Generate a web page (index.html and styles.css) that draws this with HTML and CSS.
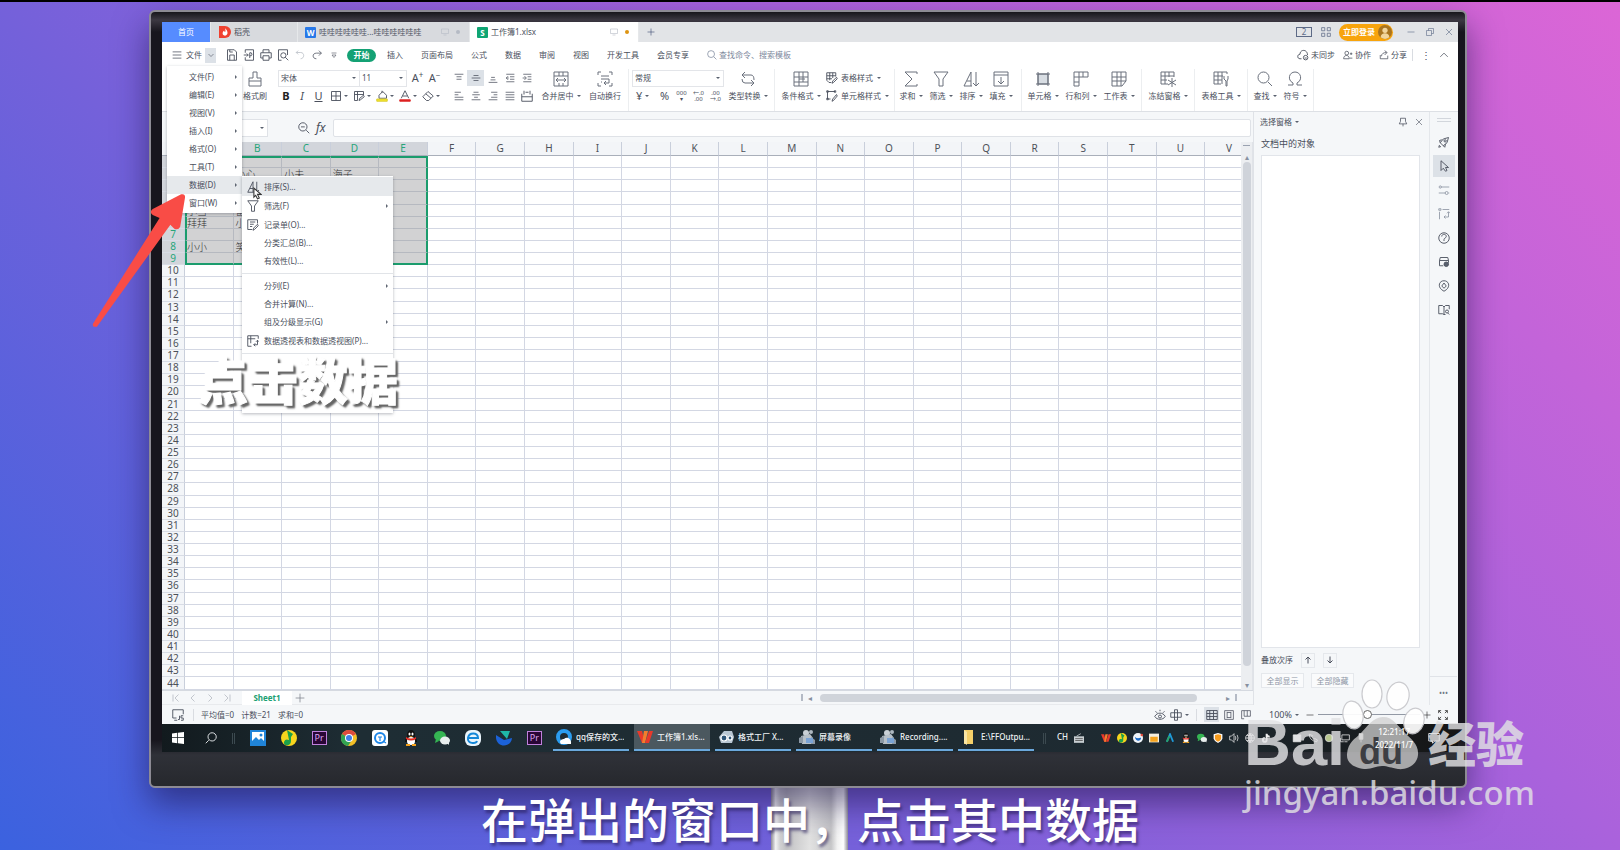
FILE: index.html
```html
<!DOCTYPE html>
<html lang="zh-CN">
<head>
<meta charset="utf-8">
<title>工作簿1.xlsx</title>
<link rel="stylesheet" href="styles.css">
</head>
<body>
<svg class="sprite" aria-hidden="true">
  <symbol id="menu" viewBox="0 0 16 16"><path d="M1 3h14M1 8h14M1 13h14"/></symbol>
  <symbol id="down" viewBox="0 0 16 16"><path d="M3 6l5 5 5-5"/></symbol>
  <symbol id="up" viewBox="0 0 16 16"><path d="M2 11l6-6 6 6"/></symbol>
  <symbol id="save" viewBox="0 0 16 16"><path d="M2 1h9l3 3v11H2zM5 15V8h6v7M5 1v3h4"/></symbol>
  <symbol id="pdf" viewBox="0 0 16 16"><path d="M3 5V1h11v14H3v-4M1 8h6M5 6l2 2-2 2M9 12V5h2q2 2 0 4H9"/></symbol>
  <symbol id="print" viewBox="0 0 16 16"><path d="M4 5V1h8v4M4 12H1V5h14v7h-3M4 9h8v6H4z"/></symbol>
  <symbol id="preview" viewBox="0 0 16 16"><path d="M6 15H2V1h12v7M11 11l4 4"/><circle cx="8.500" cy="8.500" r="3.500"/></symbol>
  <symbol id="undo" viewBox="0 0 16 16"><path d="M5 1L2 4l3 3M2 4h7c7 0 6 10 0 10"/></symbol>
  <symbol id="redo" viewBox="0 0 16 16"><path d="M11 1l4 4-4 4M15 5H7c-7 0-7 9 0 9"/></symbol>
  <symbol id="more" viewBox="0 0 16 16"><path d="M3 4h10M4 8h8l-4 5z"/></symbol>
  <symbol id="search" viewBox="0 0 16 16"><circle cx="6.500" cy="6.500" r="5.500"/><path d="M11 11l4 4"/></symbol>
  <symbol id="zoomout" viewBox="0 0 16 16"><circle cx="6.500" cy="6.500" r="5.500"/><path d="M11 11l4 4M4 6.500h5"/></symbol>
  <symbol id="brush" viewBox="0 0 16 16"><path d="M6 7V1h4v6h4v8H2V7zM2 10h12"/></symbol>
  <symbol id="border" viewBox="0 0 16 16"><path d="M2 2h12v12H2zM8 2v12M2 8h12"/></symbol>
  <symbol id="cellpen" viewBox="0 0 16 16"><path d="M6 14H2V2h12v5M2 6h12M6 2v12M8 14l1-3 5-4 1 2-5 4z"/></symbol>
  <symbol id="fill" viewBox="0 0 16 16"><path d="M4 7l5-5 5 5v4H4zM8 4V1"/><path d="M1 12h14v3H1z" fill="#f5e62a" stroke="#d8cc30"/></symbol>
  <symbol id="fontcolor" viewBox="0 0 16 16"><path d="M3 11L8 1l5 10M5 8h6"/><path d="M1 13h14v2H1z" fill="#d22" stroke="#d22"/></symbol>
  <symbol id="eraser" viewBox="0 0 16 16"><path d="M8 2l7 6-6 6H6L1 9zM5 5l7 6"/></symbol>
  <symbol id="atop" viewBox="0 0 16 16"><path d="M1 2h14M4 6h8M4 10h8"/></symbol>
  <symbol id="amid" viewBox="0 0 16 16"><path d="M4 4h8M1 8h14M4 12h8"/></symbol>
  <symbol id="abot" viewBox="0 0 16 16"><path d="M5 7h6M4 11h8M1 15h14"/></symbol>
  <symbol id="indent" viewBox="0 0 16 16"><path d="M2 2h13M8 6h7M8 10h7M2 14h13M5 5L2 8l3 3M2 8h4"/></symbol>
  <symbol id="outdent" viewBox="0 0 16 16"><path d="M2 2h13M9 6h6M9 10h6M2 14h13M4 5l3 3-3 3M1 8h5"/></symbol>
  <symbol id="aleft" viewBox="0 0 16 16"><path d="M1 2h10M1 6h6M1 10h14M1 14h14"/></symbol>
  <symbol id="acenter" viewBox="0 0 16 16"><path d="M4 2h8M2 6h12M5 10h6M1 14h14"/></symbol>
  <symbol id="aright" viewBox="0 0 16 16"><path d="M5 2h10M9 6h6M5 10h10M1 14h14"/></symbol>
  <symbol id="ajust" viewBox="0 0 16 16"><path d="M1 2h14M1 6h14M1 10h14M1 14h14"/></symbol>
  <symbol id="spread" viewBox="0 0 16 16"><path d="M1 5v10h14V5M1 9h14M4 1v5M12 1v5M6 3h4"/></symbol>
  <symbol id="merge" viewBox="0 0 16 16"><path d="M1 1h14v14H1zM1 5h14M6 1v4M10 1v4M6 12v3M10 12v3M3 9h10M5 7L3 9l2 2M11 7l2 2-2 2"/></symbol>
  <symbol id="wrap" viewBox="0 0 16 16"><path d="M4 1H1v3M12 1h3v3M4 15H1v-3M12 15h3v-3M4 5h8M4 8h8v4H7M9 10l-2 2 2 2M4 11h1"/></symbol>
  <symbol id="convert" viewBox="0 0 16 16"><path d="M5 1L2 4l3 3M2 4h9q3 0 3 5M11 9l3 3-3 3M14 12H5q-3 0-3-4"/></symbol>
  <symbol id="cond" viewBox="0 0 16 16"><path d="M1 1h14v14H1zM1 6h14M1 11h14M6 1v14M10 1v10M6 8h6"/></symbol>
  <symbol id="tstyle" viewBox="0 0 16 16"><path d="M7 14H4L1 11V1h12v5M1 5h12M1 9h7M5 1v10M9 1v7M8 15l1-3 5-5 1 2-5 5z"/></symbol>
  <symbol id="form" viewBox="0 0 16 16"><path d="M7 14H1V1h13v5M4 4h7M4 7h5M4 10h3M8 15l1-3 5-5 1 2-5 5z"/></symbol>
  <symbol id="cstyle" viewBox="0 0 16 16"><path d="M2 2h10M2 2v10M2 12h4M8 15l1-3 5-6 1 2-5 6zM1 1h2v2H1zM11 1h2v2h-2zM1 11h2v2H1z"/></symbol>
  <symbol id="sum" viewBox="0 0 16 16"><path d="M14 3V1H2l7 7-7 7h12v-2"/></symbol>
  <symbol id="filter" viewBox="0 0 16 16"><path d="M1 1h14L10 8v7H6V8z"/></symbol>
  <symbol id="sort" viewBox="0 0 16 16"><path d="M1 15L8 1v14M4 10h4M1 15h8M13 1v14M10 12l3 3 3-3"/></symbol>
  <symbol id="filldown" viewBox="0 0 16 16"><path d="M1 1h14v14H1zM1 4h14M8 6v7M5 10l3 3 3-3"/></symbol>
  <symbol id="cell" viewBox="0 0 16 16"><path d="M3 3h10v10H3z" fill="#d8dde3"/><path d="M1 3h14M1 13h14M3 1v14M13 1v14"/></symbol>
  <symbol id="rowcol" viewBox="0 0 16 16"><path d="M1 1h14v5H6v9H1zM1 6h5M6 1v5M10 1v5M1 11h5"/></symbol>
  <symbol id="sheet" viewBox="0 0 16 16"><path d="M1 1h14v9l-4 5H1zM1 6h14M1 10h14M6 1v14M10 1v14"/></symbol>
  <symbol id="freeze" viewBox="0 0 16 16"><path d="M8 13H1V1h13v5M1 5h13M5 1v12M9 1v5M1 9h6M12 7v9M8 9l8 5M16 9l-8 5"/></symbol>
  <symbol id="ttool" viewBox="0 0 16 16"><path d="M8 13H1V1h13v2M1 5h9M5 1v12M9 1v12M1 9h8M11 5v3l2 2v5h1v-5l1-2V5"/></symbol>
  <symbol id="omega" viewBox="0 0 16 16"><path d="M1 14h5v-2C0 9 2 1 8 1s8 8 2 11v2h5"/></symbol>
  <symbol id="cloud" viewBox="0 0 16 16"><path d="M6 13H4C0 13 0 7 4 7c0-7 10-7 10 1"/><circle cx="11.500" cy="11.500" r="3"/><path d="M10 12h3"/></symbol>
  <symbol id="person" viewBox="0 0 16 16"><circle cx="6" cy="5" r="3"/><path d="M1 14c0-7 9-7 9 0zM11 6h4M13 4v4M11 13h4"/></symbol>
  <symbol id="share" viewBox="0 0 16 16"><path d="M2 8v6h12V9M4 10c0-4 3-6 8-6M9 1l4 3-4 4"/></symbol>
  <symbol id="screen" viewBox="0 0 16 16"><path d="M1 2h14v9H1zM5 14h6"/></symbol>
  <symbol id="four" viewBox="0 0 16 16"><path d="M1 1h5v5H1zM10 1h5v5h-5zM1 10h5v5H1zM10 10h5v5h-5z"/></symbol>
  <symbol id="restore" viewBox="0 0 16 16"><path d="M1 5h10v10H1zM5 5V1h10v10h-4"/></symbol>
  <symbol id="close" viewBox="0 0 16 16"><path d="M2 2l12 12M14 2L2 14"/></symbol>
  <symbol id="minus" viewBox="0 0 16 16"><path d="M1 8h14"/></symbol>
  <symbol id="plus" viewBox="0 0 16 16"><path d="M1 8h14M8 1v14"/></symbol>
  <symbol id="pin" viewBox="0 0 16 16"><path d="M4 2h8v5l2 4H2l2-4zM8 11v4"/></symbol>
  <symbol id="rocket" viewBox="0 0 16 16"><path d="M14 2L7 4 3 9l4 4 5-4zM5 5L2 6l1 3M10 11l-1 4-2-2M2 12l-1 3 3-1"/><circle cx="9.500" cy="6.500" r="1.500"/></symbol>
  <symbol id="cursor" viewBox="0 0 16 16"><path d="M4 1v13l3-3 3 4 2-1-2-4h4z"/></symbol>
  <symbol id="sliders" viewBox="0 0 16 16"><path d="M4 4h11M1 12h9M14 12h1"/><circle cx="3" cy="4" r="1.500"/><circle cx="11.500" cy="12" r="2"/></symbol>
  <symbol id="pivot" viewBox="0 0 16 16"><path d="M1 1h3v2H1zM6 2h9M2 5v10M14 5v7H8M10 10l-2 2 2 2M12 7l2-2 2 2"/></symbol>
  <symbol id="pivotbox" viewBox="0 0 16 16"><path d="M6 15H1V1h14v4M5 1v10M1 5h10M14 7v6H9M11 11l-2 2 2 2M12 9l2-2 2 2"/></symbol>
  <symbol id="help" viewBox="0 0 16 16"><circle cx="8" cy="8" r="7"/><path d="M5 6c0-4 6-4 6 0 0 2-3 2-3 4v2"/></symbol>
  <symbol id="db" viewBox="0 0 16 16"><path d="M2 6l1-4h10l1 4v3M2 6h12M2 6v7h5"/><circle cx="11" cy="11" r="3" fill="#59606e"/></symbol>
  <symbol id="bulb" viewBox="0 0 16 16"><path d="M5 13C-1 8 2 1 8 1s9 7 3 12l-3 2zM8 4l3 4-3 3-3-3z"/></symbol>
  <symbol id="book" viewBox="0 0 16 16"><path d="M8 4L6 2H1v11h5l2 1zM8 4l2-2h5v5M8 14h2"/><circle cx="12" cy="10" r="2"/><path d="M13 12l2 2"/></symbol>
  <symbol id="first" viewBox="0 0 16 16"><path d="M2 1v14M13 1L6 8l7 7"/></symbol>
  <symbol id="prev" viewBox="0 0 16 16"><path d="M11 1L4 8l7 7"/></symbol>
  <symbol id="next" viewBox="0 0 16 16"><path d="M5 1l7 7-7 7"/></symbol>
  <symbol id="last" viewBox="0 0 16 16"><path d="M3 1l7 7-7 7M14 1v14"/></symbol>
  <symbol id="eye" viewBox="0 0 16 16"><path d="M1 10c3-6 11-6 14 0-3 5-11 5-14 0M2 3l2 2M8 1v2M14 3l-2 2"/><circle cx="8" cy="10" r="2"/></symbol>
  <symbol id="cross" viewBox="0 0 16 16"><path d="M6 1h4v14H6zM1 5h14v6H1z"/></symbol>
  <symbol id="vgrid" viewBox="0 0 16 16"><path d="M1 2h14v12H1zM1 6h14M1 10h14M5 2v12M10 2v12"/></symbol>
  <symbol id="vpage" viewBox="0 0 16 16"><path d="M1 1h14v14H1zM5 3v10M11 3v10M5 4h6M5 12h6"/></symbol>
  <symbol id="vbreak" viewBox="0 0 16 16"><path d="M1 14V1h14v9h-5V1M5 1v9h5M1 14h4"/></symbol>
  <symbol id="full" viewBox="0 0 16 16"><path d="M1 5V1h4M1 1l4 4M11 1h4v4M15 1l-4 4M1 11v4h4M1 15l4-4M15 11v4h-4M15 15l-4-4"/></symbol>
  <symbol id="record" viewBox="0 0 16 16"><path d="M6 12H1V1h14v6M3 15h4M10 9v5H8M15 9h-3v3h3v3h-3"/></symbol>
  <symbol id="arrup" viewBox="0 0 16 16"><path d="M8 15V2M3 7l5-5 5 5" stroke-width="2"/></symbol>
  <symbol id="arrdn" viewBox="0 0 16 16"><path d="M8 1v13M3 9l5 5 5-5" stroke-width="2"/></symbol>
  <symbol id="qqmusic" viewBox="0 0 16 16"><circle cx="8" cy="8" r="8" fill="#f7d51d" stroke="none"/><path d="M6 0l6 4-2 3v4c0 6-8 5-7 1 1-3 3-3 5-2z" fill="#1ca04a" stroke="none"/></symbol>
  <symbol id="penguin" viewBox="0 0 16 16"><g stroke="none"><ellipse cx="8" cy="5" rx="4" ry="5" fill="#111"/><path d="M2 12c0-4 2-5 6-5s6 1 6 5z" fill="#111"/><ellipse cx="8" cy="11" rx="4" ry="4" fill="#fff"/><path d="M3 7q5 3 10 0v2q-5 3-10 0z" fill="#e52b22"/><ellipse cx="6.500" cy="4" rx="1" ry="1.500" fill="#fff"/><ellipse cx="9.500" cy="4" rx="1" ry="1.500" fill="#fff"/><path d="M3 14h4v2H3zM9 14h4v2H9zM6 6h4l-2 1z" fill="#f5a11c"/></g></symbol>
  <symbol id="wechat" viewBox="0 0 16 16"><g stroke="none"><ellipse cx="6" cy="6" rx="6" ry="5" fill="#35b553"/><path d="M2 9l-1 4 4-2z" fill="#35b553"/><ellipse cx="11" cy="10.500" rx="5" ry="4" fill="#e8eeee"/><path d="M13 13l2 2v-3z" fill="#e8eeee"/></g></symbol>
  <symbol id="chrome" viewBox="0 0 16 16"><g stroke="none"><circle cx="8" cy="8" r="8" fill="#f2bf26"/><path d="M8 8L1 4a8 8 0 0 1 14 0z" fill="#dd4b3e"/><path d="M8 8L1 4a8 8 0 0 0 6 12l4-6z" fill="#32a352"/><circle cx="8" cy="8" r="4" fill="#fff"/><circle cx="8" cy="8" r="3" fill="#3f7ee8"/></g></symbol>
  <symbol id="camera" viewBox="0 0 16 16"><g stroke="none"><circle cx="7" cy="4" r="3" fill="#c9d0d6"/><circle cx="12" cy="3" r="2" fill="#aeb8c0"/><path d="M2 7l9-2 3 4v6H3z" fill="#b7c0c8"/><path d="M0 9l4-2v7H0zM12 8l4 3v4h-4z" fill="#8c98a4"/><path d="M7 9h7v5H7z" fill="#7ba3d4"/></g></symbol>
  <symbol id="wps" viewBox="0 0 16 16"><g stroke="none"><path d="M0 2h5l3 12H5z" fill="#e8392b"/><path d="M7 2h4l-3 12H5z" fill="#f57c2c"/><path d="M12 2h4l-4 12H8z" fill="#e8392b"/></g></symbol>
</svg>

<main class="page">
  <div class="stand"></div>
  <section class="monitor">
    <div class="screen">
      <header class="tabbar">
        <button class="tab home">首页</button>
        <button class="tab docer"><svg class="i12" viewBox="0 0 16 16"><path d="M0 0h8a8 8 0 0 1 0 16H0z" fill="#f0402f" stroke="none"/><path d="M8 3c4 3 5 9 0 10-5-1-3-6-1-7 0 3 3 3 1-3z" fill="#fff" stroke="none"/></svg>稻壳</button>
        <button class="tab wdoc"><span class="logo blue">W</span><span class="grow">哇哇哇哇哇哇...哇哇哇哇哇哇</span><svg class="i8 pale"><use href="#screen"/></svg><i class="dot grey"></i></button>
        <button class="tab sdoc"><span class="logo green">S</span><span class="grow">工作簿1.xlsx</span><svg class="i8 pale"><use href="#screen"/></svg><i class="dot"></i></button>
        <button class="tab add" aria-label="新建"><svg class="i8"><use href="#plus"/></svg></button>
        <div class="wintools">
          <span class="two">2</span><svg class="i10"><use href="#four"/></svg>
          <button class="login">立即登录<svg viewBox="0 0 16 16"><circle cx="8" cy="8" r="8" fill="#a87420" stroke="none"/><circle cx="8" cy="6" r="3" fill="#f2d59b" stroke="none"/><path d="M3 14c0-6 10-6 10 0q-5 4-10 0z" fill="#f2d59b" stroke="none"/></svg></button>
          <button class="wbtn" aria-label="最小化"><svg class="i8"><use href="#minus"/></svg></button>
          <button class="wbtn" aria-label="还原"><svg class="i8"><use href="#restore"/></svg></button>
          <button class="wbtn" aria-label="关闭"><svg class="i8"><use href="#close"/></svg></button>
        </div>
      </header>

      <nav class="menubar">
        <button class="filebtn"><svg class="i10"><use href="#menu"/></svg>文件</button>
        <button class="filedrop" aria-label="展开菜单"><svg class="i8"><use href="#down"/></svg></button>
        <div class="quick">
          <button aria-label="保存"><svg class="i12"><use href="#save"/></svg></button>
          <button aria-label="输出为PDF"><svg class="i12"><use href="#pdf"/></svg></button>
          <button aria-label="打印"><svg class="i12"><use href="#print"/></svg></button>
          <button aria-label="打印预览"><svg class="i12"><use href="#preview"/></svg></button>
          <button aria-label="撤销"><svg class="i10 pale2"><use href="#undo"/></svg></button>
          <button aria-label="恢复"><svg class="i10"><use href="#redo"/></svg></button>
          <button aria-label="更多"><svg class="i8"><use href="#more"/></svg></button>
        </div>
        <button class="pill">开始</button>
        <div class="tabs"><button>插入</button><button>页面布局</button><button>公式</button><button>数据</button><button>审阅</button><button>视图</button><button>开发工具</button><button>会员专享</button>
          <button class="find"><svg class="i10"><use href="#search"/></svg>查找命令、搜索模板</button></div>
        <div class="cloud">
          <button><svg class="i12"><use href="#cloud"/></svg>未同步</button>
          <button><svg class="i10"><use href="#person"/></svg>协作</button>
          <button><svg class="i10"><use href="#share"/></svg>分享</button>
          <span class="vsep"></span><span class="kebab">⋮</span><svg class="i10"><use href="#up"/></svg>
        </div>
      </nav>

      <div class="ribbon">
        <div class="group clip"><button class="big w36"><svg class="i16"><use href="#brush"/></svg><span>格式刷</span></button></div>
        <div class="group font">
          <div class="line">
            <button class="combo cfont">宋体<i class="tri"></i></button><button class="combo csize">11<i class="tri"></i></button>
            <button class="asz">A<sup>+</sup></button><button class="asz">A<sup>−</sup></button>
          </div>
          <div class="line">
            <button class="c16 fb">B</button><button class="c16 fi">I</button><button class="c17 fu">U</button>
            <button class="c23"><svg class="i12"><use href="#border"/></svg><i class="tri"></i></button>
            <button class="c23"><svg class="i12"><use href="#cellpen"/></svg><i class="tri"></i></button>
            <button class="c23"><svg class="i12"><use href="#fill"/></svg><i class="tri"></i></button>
            <button class="c23"><svg class="i12"><use href="#fontcolor"/></svg><i class="tri"></i></button>
            <button class="c23"><svg class="i12"><use href="#eraser"/></svg><i class="tri"></i></button>
          </div>
        </div>
        <div class="group align">
          <div class="line"><button class="c17"><svg class="i10"><use href="#atop"/></svg></button><button class="c17 on"><svg class="i10"><use href="#amid"/></svg></button><button class="c17"><svg class="i10"><use href="#abot"/></svg></button><button class="c17"><svg class="i10"><use href="#indent"/></svg></button><button class="c17"><svg class="i10"><use href="#outdent"/></svg></button></div>
          <div class="line"><button class="c17"><svg class="i10"><use href="#aleft"/></svg></button><button class="c17"><svg class="i10"><use href="#acenter"/></svg></button><button class="c17"><svg class="i10"><use href="#aright"/></svg></button><button class="c17"><svg class="i10"><use href="#ajust"/></svg></button><button class="c17"><svg class="i12"><use href="#spread"/></svg></button></div>
        </div>
        <div class="group row sep pr5">
          <button class="big w52"><svg class="i16"><use href="#merge"/></svg><span>合并居中<i class="tri"></i></span></button>
          <button class="big w36"><svg class="i16"><use href="#wrap"/></svg><span>自动换行</span></button>
        </div>
        <div class="group number">
          <div class="line"><button class="combo cnum">常规<i class="tri"></i></button></div>
          <div class="line"><button class="c24">¥<i class="tri"></i></button><button class="c17">%</button><button class="c17 dec">000<br>▾</button><button class="c17 dec">←.0<br>.00</button><button class="c17 dec">.00<br>→.0</button></div>
        </div>
        <div class="group row sep pr5"><button class="big w42"><svg class="i16"><use href="#convert"/></svg><span>类型转换<i class="tri"></i></span></button></div>
        <div class="group row sep styles">
          <button class="big w42"><svg class="i16"><use href="#cond"/></svg><span>条件格式<i class="tri"></i></span></button>
          <div class="stack"><button class="line"><svg class="i12"><use href="#tstyle"/></svg>表格样式<i class="tri"></i></button><button class="line"><svg class="i12"><use href="#cstyle"/></svg>单元格样式<i class="tri"></i></button></div>
        </div>
        <div class="group row sep calc">
          <button class="big w30"><svg class="i16"><use href="#sum"/></svg><span>求和<i class="tri"></i></span></button>
          <button class="big w30"><svg class="i16"><use href="#filter"/></svg><span>筛选<i class="tri"></i></span></button>
          <button class="big w30"><svg class="i16"><use href="#sort"/></svg><span>排序<i class="tri"></i></span></button>
          <button class="big w30"><svg class="i16"><use href="#filldown"/></svg><span>填充<i class="tri"></i></span></button>
        </div>
        <div class="group row sep cells">
          <button class="big w38"><svg class="i16"><use href="#cell"/></svg><span>单元格<i class="tri"></i></span></button>
          <button class="big w38"><svg class="i16"><use href="#rowcol"/></svg><span>行和列<i class="tri"></i></span></button>
          <button class="big w38"><svg class="i16"><use href="#sheet"/></svg><span>工作表<i class="tri"></i></span></button>
        </div>
        <div class="group row sep"><button class="big w52"><svg class="i16"><use href="#freeze"/></svg><span>冻结窗格<i class="tri"></i></span></button></div>
        <div class="group row sep"><button class="big w52"><svg class="i16"><use href="#ttool"/></svg><span>表格工具<i class="tri"></i></span></button></div>
        <div class="group row sep cells">
          <button class="big w30"><svg class="i16"><use href="#search"/></svg><span>查找<i class="tri"></i></span></button>
          <button class="big w30"><svg class="i16"><use href="#omega"/></svg><span>符号<i class="tri"></i></span></button>
        </div>
      </div>

      <div class="work">
        <div class="book">
          <div class="formula">
            <button class="namebox" aria-label="名称框"><i class="tri"></i></button>
            <svg class="i12"><use href="#zoomout"/></svg><span class="fx">fx</span>
            <input class="finput" aria-label="编辑栏">
          </div>
          <div class="gridrow">
            <div class="gridwrap"><table class="grid" id="grid"></table></div>
            <div class="vscroll"><span class="vsplit"></span><span class="sbtn">▴</span><span class="vthumb"></span><span class="sbtn">▾</span></div>
          </div>
          <div class="sheetbar">
            <div class="navs"><svg class="i8"><use href="#first"/></svg><svg class="i8"><use href="#prev"/></svg><svg class="i8"><use href="#next"/></svg><svg class="i8"><use href="#last"/></svg></div>
            <button class="sheet">Sheet1</button>
            <button class="addsheet" aria-label="新建工作表"><svg class="i10"><use href="#plus"/></svg></button>
            <div class="hscroll"><i class="split"></i><span class="sbtn">◂</span><span class="hthumb"></span><span class="sbtn">▸</span><i class="split"></i></div>
          </div>
        </div>
        <aside class="pane">
          <div class="panehead"><button>选择窗格<i class="tri"></i></button><span class="fillx"></span><svg class="i10"><use href="#pin"/></svg><svg class="i8"><use href="#close"/></svg></div>
          <h2>文档中的对象</h2>
          <div class="objects"></div>
          <div class="order"><span>叠放次序</span><button aria-label="上移"><svg class="i8"><use href="#arrup"/></svg></button><button aria-label="下移"><svg class="i8"><use href="#arrdn"/></svg></button></div>
          <div class="showhide"><button>全部显示</button><button>全部隐藏</button></div>
        </aside>
        <nav class="strip">
          <span class="grip"></span>
          <button aria-label="推荐"><svg class="i12"><use href="#rocket"/></svg></button>
          <button class="on" aria-label="选择"><svg class="i12"><use href="#cursor"/></svg></button>
          <button class="dim" aria-label="属性"><svg class="i12"><use href="#sliders"/></svg></button>
          <button class="dim" aria-label="透视表"><svg class="i12"><use href="#pivot"/></svg></button>
          <button aria-label="帮助"><svg class="i12"><use href="#help"/></svg></button>
          <button aria-label="备份"><svg class="i12"><use href="#db"/></svg></button>
          <button aria-label="技巧"><svg class="i12"><use href="#bulb"/></svg></button>
          <button aria-label="学习"><svg class="i12"><use href="#book"/></svg></button>
          <span class="stripmore">•••</span>
        </nav>
      </div>

      <footer class="status">
        <svg class="i12"><use href="#record"/></svg><span class="vsep"></span>
        <span class="stat">平均值=0</span><span class="stat">计数=21</span><span class="stat">求和=0</span>
        <div class="views">
          <svg class="i12"><use href="#eye"/></svg><span class="withtri"><svg class="i12"><use href="#cross"/></svg><i class="tri"></i></span><span class="vsep"></span>
          <button class="on" aria-label="普通视图"><svg class="i12"><use href="#vgrid"/></svg></button>
          <button aria-label="页面布局"><svg class="i10"><use href="#vpage"/></svg></button>
          <button aria-label="分页预览"><svg class="i10"><use href="#vbreak"/></svg></button>
          <span class="pct">100%<i class="tri"></i></span>
          <svg class="i8 dark"><use href="#minus"/></svg>
          <input class="zoom" type="range" min="0" max="100" value="48" aria-label="缩放">
          <svg class="i8 dark"><use href="#plus"/></svg><svg class="i10 dark"><use href="#full"/></svg>
        </div>
      </footer>

      <div class="taskbar">
        <div class="pinned">
          <svg class="i12" viewBox="0 0 16 16"><path d="M0 2l7-1v6H0zM8 1l8-1v7H8zM0 8h7v7l-7-1zM8 8h8v8l-8-1z" fill="#fff" stroke="none"/></svg>
          <svg class="i12 flip"><use href="#search"/></svg>
          <span class="bars"></span>
          <svg viewBox="0 0 16 16"><path d="M0 0h16v16H0z" fill="#2084d8" stroke="none"/><path d="M2 2h12v12H2z" fill="#fff" stroke="none"/><path d="M2 11l4-4 3 3 2-2 3 3v3H2z" fill="#2084d8" stroke="none"/><circle cx="11" cy="5" r="1.500" fill="#2084d8" stroke="none"/></svg>
          <svg><use href="#qqmusic"/></svg>
          <span class="pr">Pr</span>
          <svg><use href="#chrome"/></svg>
          <svg viewBox="0 0 16 16"><rect width="16" height="16" rx="3" fill="#fff" stroke="none"/><circle cx="8" cy="8" r="5" stroke="#1c86e8" stroke-width="2"/><path d="M11 11l3 2M6 7h4M8 7v4" stroke="#1c86e8"/></svg>
          <svg><use href="#penguin"/></svg>
          <svg><use href="#wechat"/></svg>
          <svg viewBox="0 0 16 16"><rect width="16" height="16" rx="6" fill="#eaf5fc" stroke="none"/><path d="M3 8h10c0-6-9-6-10 0s8 6 9 3" stroke="#1487d8" stroke-width="2"/></svg>
          <svg viewBox="0 0 16 16"><path d="M4 1h10L11 9z" fill="#1fb8a8" stroke="none"/><path d="M0 5l8 5 8-2c-1 10-15 10-16 0z" fill="#1b62d8" stroke="none"/></svg>
          <span class="pr">Pr</span>
        </div>
        <div class="tasks">
          <button><svg viewBox="0 0 16 16"><circle cx="8" cy="8" r="6" stroke="#2b9df0" stroke-width="4"/><path d="M5 15c-3-4 2-5 3-5 3-3 8 0 7 5z" fill="#fff" stroke="none"/></svg><span>qq保存的文...</span></button>
          <button class="on"><svg><use href="#wps"/></svg><span>工作簿1.xls...</span></button>
          <button><svg viewBox="0 0 16 16"><path d="M1 8l5-6h8l2 6-2 6H3z" fill="#b8c6d2" stroke="none"/><circle cx="6" cy="9" r="3" fill="#2d5476" stroke="#fff"/><circle cx="12" cy="9" r="2" fill="#2d5476" stroke="#fff"/></svg><span>格式工厂 X...</span></button>
          <button><svg><use href="#camera"/></svg><span>屏幕录像</span></button>
          <button><svg><use href="#camera"/></svg><span>Recording....</span></button>
          <button><svg viewBox="0 0 16 16"><path d="M3 1h9v14H3z" fill="#f5cf69" stroke="none"/><path d="M3 1l3 2v13l-3-2z" fill="#fbe6a5" stroke="none"/></svg><span>E:\FFOutpu...</span></button>
        </div>
        <div class="tray">
          <span class="bars"></span><b>CH</b>
          <svg viewBox="0 0 16 16"><path d="M0 6h16v9H0zM4 5l7-4" fill="#c8ced2" stroke="#c8ced2"/><path d="M2 9h12M2 12h12" stroke="#444"/></svg>
          <svg class="first"><use href="#wps"/></svg>
          <svg><use href="#qqmusic"/></svg>
          <svg viewBox="0 0 16 16"><circle cx="8" cy="8" r="8" fill="#f0f5fa" stroke="none"/><path d="M3 6c5 5 8 0 10 2-1 6-9 6-10-2z" fill="#1b6bc8" stroke="none"/><circle cx="14" cy="3" r="2" fill="#e64b3d" stroke="none"/></svg>
          <svg viewBox="0 0 16 16"><path d="M0 1h16v14H0z" fill="#f4efe0" stroke="none"/><path d="M2 6h12v8H2z" fill="#f6a41e" stroke="none"/></svg>
          <svg viewBox="0 0 16 16"><path d="M3 14L8 2l5 12" stroke="#1f9ad8" stroke-width="3"/><path d="M3 14l4-9" stroke="#27a36b" stroke-width="3"/></svg>
          <svg><use href="#penguin"/></svg>
          <svg><use href="#wechat"/></svg>
          <svg viewBox="0 0 16 16"><path d="M1 2l7-2 7 2v7q-1 4-7 7-6-3-7-7z" fill="#fff" stroke="none"/><path d="M3 3l5-1 5 1v6q-1 3-5 5-4-2-5-5z" fill="#f59b1d" stroke="none"/></svg>
          <svg class="w" viewBox="0 0 16 16"><path d="M1 5h3l4-4v14l-4-4H1zM10 5q2 3 0 6M13 3q3 5 0 10"/></svg>
          <svg class="w" viewBox="0 0 16 16"><circle cx="8" cy="8" r="7"/><path d="M1 8h14M8 1v14M3 4h10M3 12h10M8 1q-6 7 0 14M8 1q6 7 0 14"/></svg>
          <svg class="w" viewBox="0 0 16 16"><path d="M9 1v10a3 3 0 1 1-3-3M9 2q1 4 5 4" stroke-width="3"/></svg>
          <svg class="w gap" viewBox="0 0 16 16"><path d="M2 3h12v11H2z" fill="#dfe3e4"/></svg>
          <svg class="w" viewBox="0 0 16 16"><path d="M2 2q0 10 12 12l1-3-4-2-2 1-3-4 1-2z"/></svg>
          <svg viewBox="0 0 16 16"><circle cx="8" cy="8" r="6" fill="#b8c890" stroke="#ddd"/></svg>
          <svg class="w" viewBox="0 0 16 16"><path d="M3 3h12v8H3zM1 8v6h5M7 14h5"/></svg>
          <svg class="w" viewBox="0 0 16 16"><path d="M5 1h6v9H5zM8 10v5" fill="#eee"/></svg>
          <time class="clock">12:21:17<br>2022/11/7</time>
          <svg class="w note" viewBox="0 0 16 16"><path d="M1 2h14v10H9l-3 3v-3H1z"/></svg>
        </div>
      </div>

      <div class="menu">
        <button>文件(F)<i></i></button><button>编辑(E)<i></i></button><button>视图(V)<i></i></button><button>插入(I)<i></i></button><button>格式(O)<i></i></button><button>工具(T)<i></i></button><button class="on">数据(D)<i></i></button><button>窗口(W)<i></i></button>
      </div>
      <div class="submenu">
        <button class="on"><svg><use href="#sort"/></svg>排序(S)...</button>
        <button><svg><use href="#filter"/></svg>筛选(F)<i></i></button>
        <button><svg><use href="#form"/></svg>记录单(O)...</button>
        <button class="noicon">分类汇总(B)...</button>
        <button class="noicon">有效性(L)...</button>
        <hr>
        <button class="noicon">分列(E)<i></i></button>
        <button class="noicon">合并计算(N)...</button>
        <button class="noicon">组及分级显示(G)<i></i></button>
        <button><svg><use href="#pivotbox"/></svg>数据透视表和数据透视图(P)...</button>
        <hr>
        <div class="rest"></div>
      </div>
      <svg class="mouse" viewBox="0 0 10 14"><path d="M1 1v10l2-2 2 4 2-1-2-4h4z" fill="#fff" stroke="#333"/></svg>
    </div>
  </section>

  <svg class="redarrow" viewBox="0 0 100 140"><path d="M2 134L70 26l-7-3q-4-3 0-6L92 2q4-1 4 3l-5 30q-2 4-6 2l-4-4L6 137q-5 1-4-3z" fill="#f94c46" stroke="none"/></svg>
  <div class="callout">点击数据</div>
  <p class="subtitle">在弹出的窗口中，点击其中数据</p>
  <div class="mark">
    <div class="markrow">
      <span class="bai">Bai</span>
      <svg class="paw" viewBox="0 0 84 92"><g fill="#fff" stroke="#c8c8cc" opacity=".93"><ellipse cx="30" cy="15" rx="10" ry="14"/><ellipse cx="56" cy="17" rx="11" ry="14" transform="rotate(12 56 17)"/><ellipse cx="11" cy="36" rx="10" ry="14" transform="rotate(-10 11 36)"/><ellipse cx="72" cy="42" rx="10" ry="13" transform="rotate(18 72 42)"/></g><path d="M41 38c10 0 14 8 21 15s15 12 14 23-13 15-20 14-10-3-16-3-10 3-16 3S4 87 5 75s8-15 14-21 12-16 22-16z" fill="#d0d0d0" fill-opacity=".76" stroke="none"/><text x="39" y="85" text-anchor="middle" class="du">du</text></svg>
      <span class="jy">经验</span>
    </div>
    <div class="url">jingyan.baidu.com</div>
  </div>
</main>
<script src="grid.js"></script>
</body>
</html>
```
FILE: grid.js
```js
const columns = "ABCDEFGHIJKLMNOPQRSTUV".split("");
const cells = {
  B2: "小心", C2: "小夫", D2: "海子",
  A5: "小当", B5: "雷雷",
  A6: "拜拜", B6: "小明", E6: "轮",
  A8: "小小", B8: "笑笑"
};
const lastSelectedRow = 9;
const lastSelectedCol = 4;

const head = columns
  .map((c, i) => `<th class="${i <= lastSelectedCol ? "sel" : ""}">${c}</th>`)
  .join("");
let body = "";
for (let r = 1; r <= 44; r++) {
  const rowSel = r <= lastSelectedRow;
  const tds = columns.map((c, i) => {
    const cls = [];
    if (rowSel && i <= lastSelectedCol) {
      cls.push("sel");
      if (r === 1) cls.push("t");
      if (r === lastSelectedRow) cls.push("b");
      if (i === 0) cls.push("l");
      if (i === lastSelectedCol) cls.push("r");
    }
    return `<td class="${cls.join(" ")}">${cells[c + r] || ""}</td>`;
  }).join("");
  body += `<tr><th class="${rowSel ? "sel" : ""}">${r}</th>${tds}</tr>`;
}
document.getElementById("grid").innerHTML =
  `<colgroup><col class="numcol"></colgroup><thead><tr><th></th>${head}</tr></thead><tbody>${body}</tbody>`;
```
FILE: styles.css
```css
* { box-sizing: border-box; }
body { margin: 0; font: 8px/12px "Noto Sans", "Noto Sans CJK SC", sans-serif; color: #4a4f5c; }
button { margin: 0; padding: 0; border: 0; background: none; font: inherit; color: inherit; white-space: nowrap; display: flex; align-items: center; }
svg { fill: none; stroke: currentColor; stroke-width: 1.2; flex: none; }
.sprite { position: absolute; width: 0; height: 0; }
.i8 { width: 8px; height: 8px; } .i10 { width: 10px; height: 10px; } .i12 { width: 12px; height: 12px; }
.i16 { width: 16px; height: 16px; }
.tri { display: inline-block; width: 0; height: 0; border: 2px solid transparent; border-top-color: #59606e; border-bottom: 0; margin-left: 3px; flex: none; }
.vsep { width: 1px; height: 12px; background: #d9dce1; }

.page { position: relative; min-height: 100vh; padding: 8px 153px 62px 149px; display: flex; flex-direction: column; overflow: hidden; border-top: 2px solid #000;
  background: linear-gradient(45deg, #3b62df 0%, #7461da 34%, #aa62dc 66%, #dc66d6 100%); }
.stand { position: absolute; left: 771px; bottom: 0; width: 77px; height: 66px; background: linear-gradient(90deg, #8e8b98 0, #f4f4f4 6%, #d0d0d2 12%, #c2c2c4 20%, #e2e2e2 50%, #c6c6c8 78%, #f2f2f2 86%, #fff 94%, #8e8b98 100%); }
.monitor { position: relative; flex: 1; display: flex; padding: 10px 7px 34px 11px; border: 2px solid #8d8b94; border-radius: 6px; background: linear-gradient(#17161b 0, #3c3842 8px, #17151d 20px, #17151d 94%, #2f3138 96%, #26282d 100%); box-shadow: 0 16px 34px rgba(24, 14, 70, .55); }
.screen { position: relative; flex: 1; min-width: 0; display: flex; flex-direction: column; background: #f5f7f9; }

.tabbar { display: flex; height: 20px; background: #e2e4e7; }
.tab { height: 20px; background: #d8dade; border-right: 1px solid #e6e8ea; gap: 3px; }
.home { width: 49px; justify-content: center; background: #568cff; color: #fff; }
.docer { width: 87px; padding-left: 8px; }
.wdoc { width: 172px; padding: 0 9px 0 7px; }
.sdoc { width: 169px; padding: 0 9px 0 7px; background: #fff; }
.grow { flex: 1; text-align: left; }
.logo { width: 11px; height: 11px; border-radius: 1px; color: #fff; font-weight: 700; line-height: 11px; text-align: center; }
.blue { background: #2878e8; } .green { background: #0fa573; }
.pale { color: #b5bac4; } .pale2 { color: #b4b9c2; } .dark { color: #222; }
.dot { width: 4px; height: 4px; border-radius: 2px; background: #dd9412; margin-left: 4px; } .grey { background: #b5bac4; }
.add { width: 24px; background: none; border: 0; justify-content: center; color: #3d4a72; }
.wintools { margin-left: auto; display: flex; align-items: center; color: #5d6a86; }
.two { width: 16px; height: 10px; border: 1px solid #5d6a86; line-height: 8px; text-align: center; margin-right: 9px; }
.login { height: 17px; margin: 0 8px 0 8px; padding: 0 1px 0 4px; border-radius: 9px; background: #f8a40c; color: #fff; gap: 3px; font-weight: 700; }
.login svg { width: 14px; height: 14px; }
.wbtn { width: 19px; justify-content: center; }

.menubar { display: flex; align-items: center; height: 26px; background: #fff; padding: 0 9px 0 10px; }
.filebtn { gap: 4px; width: 33px; }
.filedrop { width: 11px; height: 15px; background: #dce1e7; justify-content: center; margin-right: 7px; }
.quick { display: flex; } .quick button { width: 17px; justify-content: center; }
.pill { width: 29px; height: 13px; border-radius: 7px; background: #14a174; color: #fff; justify-content: center; font-weight: 700; margin: 0 11px 0 5px; }
.tabs { display: flex; gap: 18px; } .find { gap: 2px; color: #7d889c; }
.cloud { margin-left: auto; display: flex; align-items: center; gap: 8px; } .cloud button { gap: 2px; }
.cloud .vsep { margin: 0 0 0 -3px; } .kebab { font-size: 10px; }

.ribbon { display: flex; height: 44px; background: #fff; border-bottom: 1px solid #dde0e5; padding-top: 1px; }
.group { flex: none; } .row { display: flex; } .sep { border-right: 1px solid #eceef0; }
.line { display: flex; align-items: center; height: 18px; }
.clip { width: 111px; display: flex; justify-content: flex-end; }
.font { width: 173px; padding-left: 5px; }
.align { width: 89px; padding-left: 4px; }
.number { width: 98px; padding-left: 3px; }
.pr5 { padding-right: 5px; }
.big { flex-direction: column; height: 34px; padding-top: 2px; gap: 3px; color: #6a707c; } .big span { display: flex; align-items: center; color: #4a4f5c; }
.big svg { stroke-width: 1; }
.w30 { width: 30px; } .w36 { width: 36px; } .w38 { width: 38px; } .w42 { width: 42px; } .w52 { width: 52px; }
.combo { height: 17px; border: 1px solid #e3e5e9; padding: 0 3px 0 2px; justify-content: space-between; }
.cfont { width: 82px; } .csize { width: 47px; border-left: 0; } .cnum { width: 92px; }
.asz { width: 17px; justify-content: center; font-size: 11px; } .asz sup { font-size: 8px; line-height: 8px; margin-bottom: 6px; }
.csize + .asz { margin-left: 2px; }
.c16, .c17 { justify-content: center; font-size: 11px; } .c16 { width: 16px; } .c17 { width: 17px; height: 16px; }
.c23 { width: 23px; padding-left: 3px; } .c23 .tri { margin-left: 2px; }
.c24 { width: 24px; padding-left: 4px; font-size: 11px; }
.fb { font-weight: 700; color: #222; } .fi { font-style: italic; } .fu { text-decoration: underline; }
.dec { font-size: 6px; line-height: 6px; }
.on { background: #dce1e7; }
.styles { padding: 0 5px; } .stack { padding-left: 4px; } .stack .line { gap: 3px; } .stack .tri { margin-left: 1px; }
.calc { padding: 0 5px 0 1px; } .cells { padding: 0 3px 0 2px; }

.work { flex: 1; min-height: 0; display: flex; }
.book { flex: 1; min-width: 0; display: flex; flex-direction: column; }
.formula { display: flex; align-items: center; height: 30px; padding: 2px 2px 0 30px; }
.namebox { width: 76px; height: 18px; background: #fff; border: 1px solid #dfe2e7; justify-content: flex-end; padding-right: 3px; margin-right: 30px; }
.fx { font: italic 12px/14px "Noto Sans", sans-serif; width: 23px; padding-left: 6px; }
.finput { flex: 1; height: 18px; border: 1px solid #dfe2e7; border-radius: 2px; background: #fff; }
.gridrow { flex: 1; min-height: 0; display: flex; }
.gridwrap { flex: 1; min-width: 0; overflow: hidden; background: #fff; }
.grid { table-layout: fixed; border-spacing: 0; width: calc(100% + 13px); height: 100%; font-size: 10px; line-height: 11px; }
.numcol { width: 23px; }
.grid th { padding: 0; font-weight: 400; background: #f3f5f8; border-right: 1px solid #c9cfdb; border-bottom: 1px solid #d8dce5; height: 12px; color: #4d5159; }
.grid thead th { height: 14px; border-bottom-color: #a9afba; }
.grid thead th:first-child { border-right-color: #f3f5f8; }
.grid td { padding: 0 0 0 2px; height: 12px; border-right: 1px solid #d3d7e3; border-bottom: 1px solid #d3d7e3; white-space: nowrap; font-family: "Noto Sans CJK SC", sans-serif; font-weight: 300; color: #333; }
.grid th.sel { background: #d2d5db; color: #27a57a; }
.grid td.sel { background: #d2d2d3; border-color: #b6b9c0; }
.grid td.t { border-top: 2px solid #1b9c6d; } .grid td.b { border-bottom: 2px solid #1b9c6d; }
.grid td.l { border-left: 2px solid #1b9c6d; padding-left: 0; } .grid td.r { border-right: 2px solid #1b9c6d; }
.vscroll { width: 12px; display: flex; flex-direction: column; align-items: center; background: #eceef1; border-right: 1px solid #e0e3e8; }
.vsplit { width: 7px; height: 4px; border-bottom: 1px solid #9aa2b1; margin-bottom: 6px; }
.sbtn { color: #8790a0; line-height: 10px; }
.vthumb { flex: 1; width: 8px; border-radius: 4px; background: #cfd3da; margin: 0 0 14px; }
.sheetbar { display: flex; height: 15px; align-items: center; border-top: 1px solid #d5d9e0; border-bottom: 1px solid #e8eaed; }
.navs { display: flex; width: 80px; padding-left: 10px; gap: 9px; color: #a0a5ae; }
.sheet { width: 50px; height: 14px; background: #fff; justify-content: center; color: #1ba072; font-weight: 700; }
.addsheet { padding-left: 3px; color: #7b808b; }
.hscroll { margin-left: auto; width: calc(40% + 16px); display: flex; align-items: center; gap: 5px; padding-right: 16px; }
.split { width: 2px; height: 7px; background: #b4bac5; } .hthumb { flex: 1; height: 8px; border-radius: 4px; background: #d0d4da; margin: 0 24px 0 3px; }

.pane { width: 176px; border-left: 1px solid #dfe2e7; padding: 0 9px 7px 7px; display: flex; flex-direction: column; }
.panehead { display: flex; align-items: center; height: 20px; gap: 7px; margin: 0 -3px 0 -1px; } .fillx { flex: 1; }
.pane h2 { margin: 5px 0; font: inherit; font-size: 9px; line-height: 13px; }
.objects { flex: 1; border: 1px solid #e2e5ea; background: #fff; }
.order { display: flex; align-items: center; height: 18px; margin-top: 3px; } .order span { width: 40px; }
.order button { width: 14px; height: 15px; border: 1px solid #e5e8ec; justify-content: center; margin-right: 8px; }
.showhide { display: flex; gap: 7px; margin: 4px 0 10px; color: #8d96a5; } .showhide button { width: 43px; height: 15px; border: 1px solid #e5e8ec; background: #fafbfc; justify-content: center; }
.strip { width: 29px; border-left: 1px solid #e4e7eb; display: flex; flex-direction: column; align-items: center; padding-right: 1px; }
.grip { width: 14px; height: 4px; border: 1px solid #d2d6dc; border-width: 1px 0; margin: 6px 0 9px; }
.strip button { width: 22px; height: 22px; margin-bottom: 2px; justify-content: center; } .dim { color: #949ba8; }
.stripmore { margin-top: auto; width: 100%; border-top: 1px solid #e0e3e8; text-align: center; height: 29px; line-height: 32px; color: #707886; }

.status { display: flex; align-items: center; height: 19px; padding: 0 10px; } .status > .vsep { margin: 0 7px 0 9px; }
.stat { margin-right: 7px; }
.views { margin-left: auto; display: flex; align-items: center; gap: 2px; }
.withtri { display: flex; align-items: center; margin: 0 5px 0 2px; } .views button { width: 15px; height: 15px; justify-content: center; }
.views .vsep { margin-right: 5px; }
.pct { margin: 0 5px 0 14px; font-size: 9px; display: flex; align-items: center; }
.zoom { -webkit-appearance: none; appearance: none; width: 102px; height: 9px; margin: 0 1px 0 2px; background: linear-gradient(#9299a5, #9299a5) center / 100% 1px no-repeat; }
.zoom::-webkit-slider-thumb { -webkit-appearance: none; width: 9px; height: 9px; border: 1px solid #666; border-radius: 50%; background: #fff; }
.views .dark:last-child { margin-left: 5px; }

.taskbar { display: flex; height: 28px; background: linear-gradient(90deg, #121a1e, #1e2d34 15%, #1e2a31 80%, #151515); color: #eef2f4; align-items: center; }
.pinned { display: flex; flex: none; align-items: center; width: 391px; padding: 0 11px 0 10px; justify-content: space-between; }
.pinned svg:not(.i12), .tasks svg { width: 16px; height: 16px; }
.pinned .flip { transform: scaleX(-1); margin-left: 6px; }
.bars { width: 3px; height: 11px; border: 1px solid #3c4a50; border-width: 0 1px; flex: none; }
.pr { width: 15px; height: 14px; border: 1px solid #c080dc; background: #2a0636; color: #dca8f0; font-size: 9px; line-height: 12px; text-align: center; }
.tasks { display: flex; flex: none; gap: 5px; height: 28px; } .tasks button { width: 76px; height: 27px; gap: 4px; padding: 0 3px; border-bottom: 2px solid #6ba8dc; } .tasks span { overflow: hidden; font-weight: 500; }
.tasks .on { background: #4b585f; }
.tray { flex: 1; min-width: 0; display: flex; align-items: center; gap: 6px; padding-left: 9px; } .tray svg { width: 10px; height: 10px; } .tray b { margin: 0 0 2px 5px; font-weight: 500; }
.tray .first { margin-left: 11px; } .tray .gap { margin-left: 15px; } .w { color: #eee; }
.clock { position: relative; z-index: 2; flex: none; width: 44px; text-align: center; color: #fff; font-weight: 500; font-size: 8px; line-height: 13px; } .tray .note { width: 12px; height: 12px; margin-left: 6px; }

.menu, .submenu { position: absolute; background: #fff; box-shadow: 0 1px 3px rgba(50, 55, 70, .35); }
.menu { left: 5px; top: 44px; width: 75px; padding: 2px 0 1px; }
.menu button { width: 100%; height: 18px; padding: 0 5px 0 22px; justify-content: space-between; }
.menu i, .submenu i { border: 2px solid transparent; border-left-color: #5f6672; border-right: 0; margin-left: auto; }
.submenu { left: 80px; top: 154px; width: 151px; padding-top: 1px; }
.submenu button { width: 100%; height: 19px; padding: 0 5px; gap: 5px; } .submenu svg { width: 12px; height: 12px; }
.submenu .noicon { height: 18px; padding-left: 22px; } .submenu .on, .menu .on { background: #e6e9ec; }
.submenu hr { margin: 3px 0; border: 0; border-top: 1px solid #e1e4e8; } .rest { height: 56px; }
.mouse { position: absolute; left: 91px; top: 165px; width: 9px; height: 13px; }

.redarrow { position: absolute; left: 91px; top: 189px; width: 98px; height: 140px; }
.callout { position: absolute; left: 198px; top: 341px; font: 900 50px/70px "Noto Sans CJK SC", sans-serif; color: #fff; -webkit-text-stroke: 1px #fff; text-shadow: 3px 3px 2px #666, 2px 2px 2px #777; }
.subtitle { position: absolute; left: 0; right: 0; bottom: 3px; margin: 0; font: 500 47px/58px "Noto Sans CJK SC", sans-serif; text-align: center; color: #fff; text-shadow: 2px 3px 3px rgba(40, 30, 90, .6); }
.mark { position: absolute; z-index: 1; right: 82px; bottom: 37px; width: 294px; color: rgba(226, 226, 228, .82); }
.markrow { display: flex; align-items: flex-end; height: 94px; padding-bottom: 2px; }
.bai { font: 700 65px/56px "Liberation Sans", sans-serif; width: 98px; }
.paw { width: 84px; height: 92px; } .du { font: 700 36px "Liberation Sans", sans-serif; fill: #3d3e43; stroke: none; }
.jy { font: 900 48px/60px "Noto Sans CJK SC", sans-serif; margin-left: 2px; }
.url { font: 500 33px/40px "Noto Sans", sans-serif; }
```
